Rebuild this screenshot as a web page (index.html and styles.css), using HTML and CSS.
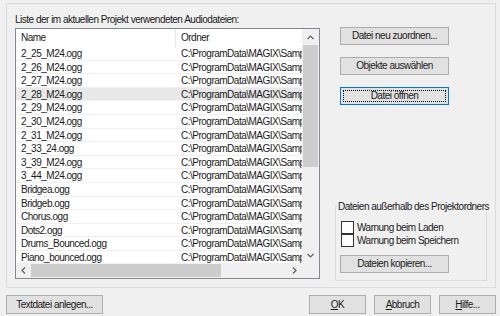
FILE: index.html
```html
<!DOCTYPE html>
<html lang="de">
<head>
  <meta charset="UTF-8">
  <title>Audiodateien</title>
  <link rel="stylesheet" href="styles.css">
</head>
<body>
  <div class="panel">
    <div class="left">
      <div class="caption">Liste der im aktuellen Projekt verwendeten Audiodateien:</div>
      <div class="listbox">
        <div class="list-area">
          <div class="row head">
            <div class="c1">Name</div>
            <div class="c2">Ordner</div>
          </div>
          <div class="row"><div class="c1">2_25_M24.ogg</div><div class="c2">C:\ProgramData\MAGIX\Samplitude Pro X</div></div>
          <div class="row"><div class="c1">2_26_M24.ogg</div><div class="c2">C:\ProgramData\MAGIX\Samplitude Pro X</div></div>
          <div class="row"><div class="c1">2_27_M24.ogg</div><div class="c2">C:\ProgramData\MAGIX\Samplitude Pro X</div></div>
          <div class="row hot"><div class="c1">2_28_M24.ogg</div><div class="c2">C:\ProgramData\MAGIX\Samplitude Pro X</div></div>
          <div class="row"><div class="c1">2_29_M24.ogg</div><div class="c2">C:\ProgramData\MAGIX\Samplitude Pro X</div></div>
          <div class="row"><div class="c1">2_30_M24.ogg</div><div class="c2">C:\ProgramData\MAGIX\Samplitude Pro X</div></div>
          <div class="row"><div class="c1">2_31_M24.ogg</div><div class="c2">C:\ProgramData\MAGIX\Samplitude Pro X</div></div>
          <div class="row"><div class="c1">2_33_24.ogg</div><div class="c2">C:\ProgramData\MAGIX\Samplitude Pro X</div></div>
          <div class="row"><div class="c1">3_39_M24.ogg</div><div class="c2">C:\ProgramData\MAGIX\Samplitude Pro X</div></div>
          <div class="row"><div class="c1">3_44_M24.ogg</div><div class="c2">C:\ProgramData\MAGIX\Samplitude Pro X</div></div>
          <div class="row"><div class="c1">Bridgea.ogg</div><div class="c2">C:\ProgramData\MAGIX\Samplitude Pro X</div></div>
          <div class="row"><div class="c1">Bridgeb.ogg</div><div class="c2">C:\ProgramData\MAGIX\Samplitude Pro X</div></div>
          <div class="row"><div class="c1">Chorus.ogg</div><div class="c2">C:\ProgramData\MAGIX\Samplitude Pro X</div></div>
          <div class="row"><div class="c1">Dots2.ogg</div><div class="c2">C:\ProgramData\MAGIX\Samplitude Pro X</div></div>
          <div class="row"><div class="c1">Drums_Bounced.ogg</div><div class="c2">C:\ProgramData\MAGIX\Samplitude Pro X</div></div>
          <div class="row"><div class="c1">Piano_bounced.ogg</div><div class="c2">C:\ProgramData\MAGIX\Samplitude Pro X</div></div>
        </div>
        <div class="vscroll">
          <div class="arrow">
            <svg width="7" height="5" viewBox="0 0 7 5"><path d="M0.5 4 L3.5 1 L6.5 4" fill="none" stroke="#606060" stroke-width="1.2"/></svg>
          </div>
          <div class="track"><div class="thumb"></div></div>
          <div class="arrow">
            <svg width="7" height="5" viewBox="0 0 7 5"><path d="M0.5 1 L3.5 4 L6.5 1" fill="none" stroke="#606060" stroke-width="1.2"/></svg>
          </div>
        </div>
        <div class="hscroll">
          <div class="arrow">
            <svg width="5" height="7" viewBox="0 0 5 7"><path d="M4 0.5 L1 3.5 L4 6.5" fill="none" stroke="#606060" stroke-width="1.2"/></svg>
          </div>
          <div class="track"><div class="thumb"></div></div>
          <div class="arrow">
            <svg width="5" height="7" viewBox="0 0 5 7"><path d="M1 0.5 L4 3.5 L1 6.5" fill="none" stroke="#606060" stroke-width="1.2"/></svg>
          </div>
        </div>
        <div class="corner"></div>
      </div>
    </div>

    <div class="right">
      <div class="actions">
        <button class="btn">Datei neu zuordnen...</button>
        <button class="btn">Objekte auswählen</button>
        <button class="btn default"><span class="focus">Datei öffnen</span></button>
      </div>
      <fieldset class="group">
        <legend>Dateien außerhalb des Projektordners</legend>
        <label class="check"><span class="box"></span>Warnung beim Laden</label>
        <label class="check"><span class="box"></span>Warnung beim Speichern</label>
        <button class="btn copy">Dateien kopieren...</button>
      </fieldset>
    </div>
  </div>

  <div class="footer">
    <button class="btn wide">Textdatei anlegen...</button>
    <div class="spacer"></div>
    <button class="btn small"><u>O</u>K</button>
    <button class="btn small"><u>A</u>bbruch</button>
    <button class="btn small"><u>H</u>ilfe...</button>
  </div>
</body>
</html>
```

FILE: styles.css
```css
body { margin:0; background:#f0f0f0; font-family:"Liberation Sans", Arial, sans-serif; font-size:10px; letter-spacing:-0.5px; color:#1a1a1a; width:500px; height:316px; overflow:hidden; }

.panel { margin:3px 0 0 6px; width:488px; height:283px; border:1px solid #dcdcdc; display:flex; }
.left { margin-left:8px; width:305px; }
.caption { height:14px; margin-top:9px; line-height:14px; white-space:nowrap; }
.listbox { margin-top:1px; width:305px; height:251px; box-sizing:border-box; border:1px solid #828790; background:#fff; display:grid; grid-template-columns:1fr 17px; grid-template-rows:1fr 15px; overflow:hidden; }

.list-area { overflow:hidden; }
.row { display:flex; height:13.6px; line-height:13.6px; border-bottom:1px solid #f0f0f0; box-sizing:border-box; }
.row.head { height:18px; line-height:18px; border-bottom:none; }
.row.head .c1 { border-right:1px solid #e5e5e5; }
.row.hot { background:#e8e8e8; }
.c1 { width:160px; padding-left:5px; box-sizing:border-box; white-space:nowrap; overflow:hidden; }
.c2 { flex:1; padding-left:5px; white-space:nowrap; overflow:hidden; }

.vscroll { background:#f0f0f0; display:flex; flex-direction:column; }
.vscroll .arrow { height:16px; display:flex; align-items:center; justify-content:center; }
.vscroll .track { flex:1; }
.vscroll .thumb { margin:0 1px; height:122px; background:#cdcdcd; }

.hscroll { background:#f0f0f0; display:flex; }
.hscroll .arrow { width:15px; display:flex; align-items:center; justify-content:center; }
.hscroll .track { flex:1; display:flex; align-items:center; }
.hscroll .thumb { width:190px; height:13px; background:#cdcdcd; }
.corner { background:#f0f0f0; }

.right { margin-left:19px; width:152px; }
.actions { display:flex; flex-direction:column; gap:12px; margin-top:23px; margin-left:1px; }
.btn { font:inherit; letter-spacing:inherit; color:#1a1a1a; background:#e1e1e1; border:1px solid #adadad; width:109px; height:18px; padding:0; line-height:14px; white-space:nowrap; box-sizing:border-box; }
.btn.default { border-color:#0078d7; padding:2px; }
.btn .focus { display:block; height:100%; line-height:10px; border:1px dotted #000; box-sizing:border-box; }

.group { margin:96px 0 0 -4px; padding:9px 4px 8px 4px; width:152px; min-width:0; height:80px; box-sizing:border-box; border:1px solid #dcdcdc; }
.group legend { padding:0 1px; margin-left:-3px; white-space:nowrap; }
.check { display:flex; align-items:center; height:13px; margin-left:1px; white-space:nowrap; }
.box { width:11px; height:11px; border:1px solid #333; background:#fff; margin-right:3px; }
.copy { margin-top:8px; }

.footer { display:flex; gap:8px; margin:7px 0 0 6px; width:490px; }
.btn.wide { width:97px; height:19px; }
.spacer { flex:1; }
.btn.small { width:57px; height:19px; }
```
